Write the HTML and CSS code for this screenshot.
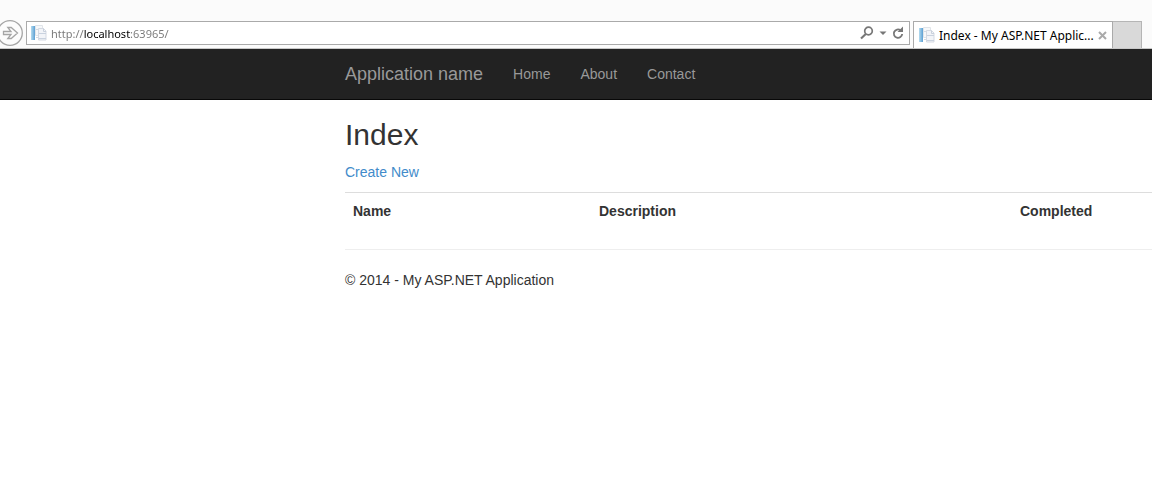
FILE: index.html
```html
<!DOCTYPE html>
<html lang="en">
<head>
<meta charset="utf-8">
<title>Index - My ASP.NET Application</title>
<link rel="stylesheet" href="styles.css">
</head>
<body>
<svg class="defs" width="0" height="0" aria-hidden="true">
  <defs>
    <linearGradient id="spine" x1="0" x2="1" y1="0" y2="0"><stop offset="0" stop-color="#b5dcf0"/><stop offset="1" stop-color="#5b9fd3"/></linearGradient>
    <symbol id="page" viewBox="0 0 16 16">
      <path d="M0 1h4v14H0z" fill="url(#spine)"/>
      <path d="M4.500 .5h7v10h-7z" fill="#f6f8fa" stroke="#e0e4e9"/>
      <path d="M5 4.500h3M5 12.500h2" stroke="#d3dae2"/>
      <path d="M7.500 3.500h5l2.500 2.500v9H7.500z" fill="#f2f4f8" stroke="#d5dae3"/>
      <path d="M12.500 3.500v3H15" fill="none" stroke="#c8d0dc"/>
      <path d="M8 8.500h7M8 13.500h7" stroke="#c9d2df"/>
    </symbol>
  </defs>
</svg>
<div class="chrome">
  <button class="forward" type="button" aria-label="Forward">
    <svg width="23" height="26" viewBox="0 0 23 26" fill="none" stroke="#a5a5a5">
      <circle cx="10" cy="13" r="12.300" fill="#fcfcfc" stroke-width="1.300"/>
      <path d="M3.500 11.500h7.500L7.800 7.500h3.400l6.300 5.500-6.300 5.500H7.800l3.200-4H3.500z" stroke-width="1.300"/>
    </svg>
  </button>
  <div class="address">
    <svg width="16" height="16" aria-hidden="true"><use href="#page"/></svg>
    <input class="url" type="text" aria-label="Address" value="http://localhost:63965/">
    <button type="button" aria-label="Search">
      <svg width="14" height="14" viewBox="0 0 14 14" fill="none" stroke="#777"><circle cx="8.500" cy="5" r="3.800" stroke-width="1.700"/><path d="M5.800 8L1 12.500" stroke-width="2.200"/></svg>
    </button>
    <button type="button" aria-label="Show address list">
      <svg width="8" height="14" viewBox="0 0 8 14"><path d="M.5 5.500h7L4 9z" fill="#777"/></svg>
    </button>
    <button class="reload" type="button" aria-label="Refresh">
      <svg width="12" height="14" viewBox="0 0 12 14" fill="none" stroke="#777" stroke-width="1.800"><path d="M8.500 4.200A4.200 4.200 0 1 0 10.200 8"/><path d="M5.500 6h5.500V.5z" fill="#777" stroke="none"/></svg>
    </button>
  </div>
  <div class="tab">
    <svg width="16" height="16" aria-hidden="true"><use href="#page"/></svg>
    <span class="tab-title">Index - My ASP.NET Applic...</span>
    <button type="button" aria-label="Close tab">
      <svg width="9" height="9" viewBox="0 0 9 9"><path d="M1 1l7 7M8 1L1 8" stroke="#aaa" stroke-width="2"/></svg>
    </button>
  </div>
  <button class="new-tab" type="button" aria-label="New tab"></button>
</div>
<nav class="navbar">
  <a class="brand" href="#">Application name</a>
  <a href="#">Home</a>
  <a href="#">About</a>
  <a href="#">Contact</a>
</nav>
<main class="content">
  <h2>Index</h2>
  <p><a href="#">Create New</a></p>
  <table>
    <thead><tr><th class="name" scope="col">Name</th><th class="description" scope="col">Description</th><th scope="col">Completed</th></tr></thead>
  </table>
  <footer>© 2014 - My ASP.NET Application</footer>
</main>
</body>
</html>
```
FILE: styles.css
```css
* {
  box-sizing: border-box;
}

body {
  margin: 0;
  background: #fff;
  color: #333;
  font: 14px/20px "Liberation Sans", Arial, sans-serif;
}

.defs {
  position: absolute;
}

button {
  display: flex;
  padding: 0;
  border: 0;
  background: none;
}

.chrome {
  display: flex;
  align-items: flex-start;
  padding: 21px 10px 0 0;
  border-bottom: 1px solid #c8c8c8;
  background: #fbfbfb;
  font: 12px/16px "Noto Sans", "Open Sans", sans-serif;
}

.forward {
  margin: -1px 3px 0 0;
}

.address {
  display: flex;
  flex: 1;
  align-items: center;
  height: 24px;
  margin-right: 3px;
  padding: 0 5px 0 4px;
  border: 1px solid #aaa;
  background: #fff;
}

.url {
  flex: 1;
  min-width: 0;
  margin-left: 4px;
  padding: 2px 0 0;
  border: 0;
  outline: 0;
  background: linear-gradient(to right, #777 33px, #000 33px, #000 79px, #777 79px) text;
  -webkit-text-fill-color: transparent;
  font: inherit;
  font-size: 11px;
}

.address button {
  margin-right: 5px;
}

.address .reload {
  margin-right: 0;
}

.tab {
  display: flex;
  align-items: center;
  width: 200px;
  height: 27px;
  padding: 0 5px;
  border: 1px solid #aaa;
  border-bottom: 0;
  background: #fff;
  color: #000;
}

.tab-title {
  flex: 1;
  margin-left: 4px;
  padding-top: 2px;
  white-space: nowrap;
}

.new-tab {
  width: 29px;
  height: 27px;
  border: 1px solid #b5b5b5;
  border-width: 1px 1px 0 0;
  background: #d9d9d9;
}

.navbar {
  display: flex;
  padding-left: 345px;
  border-bottom: 1px solid #080808;
  background: #222;
}

.navbar a {
  padding: 15px;
  color: #999;
  text-decoration: none;
}

.navbar .brand {
  padding-left: 0;
  font-size: 18px;
}

.content {
  padding: 18px 0 20px 345px;
}

h2 {
  margin: 0 0 11px;
  font-size: 30px;
  font-weight: 400;
  line-height: 33px;
}

p {
  margin: 0 0 10px;
}

p a {
  color: #428bca;
  text-decoration: none;
}

table {
  width: 100%;
  margin-bottom: 20px;
  border-collapse: collapse;
  table-layout: fixed;
}

th {
  padding: 8px;
  border-top: 1px solid #ddd;
  text-align: left;
}

.name {
  width: 246px;
}

.description {
  width: 421px;
}

footer {
  padding-top: 20px;
  border-top: 1px solid #eee;
}
```
